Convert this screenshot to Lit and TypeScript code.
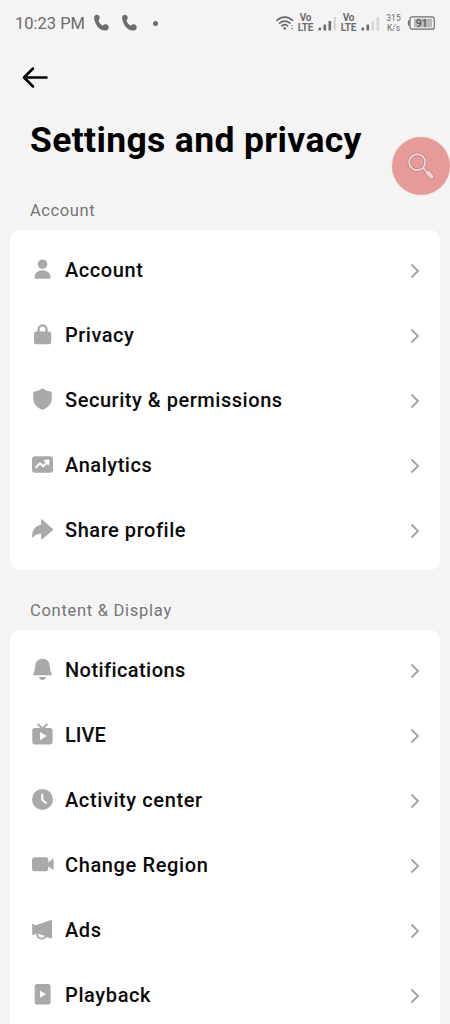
import { LitElement, html, css, svg, TemplateResult } from "lit";
import { customElement, property } from "lit/decorators.js";

type Item = { icon: string; label: string; tracking: number };

const icons: Record<string, TemplateResult> = {
  account: svg`<circle cx="12.5" cy="7.2" r="4.8"/><path d="M4.5 20.5C4.500 16.400 8 13.300 12.500 13.300s8.100 2.900 8.100 7.200q0 1.200-1.200 1.200H5.700q-1.200 0-1.200-1.200z"/>`,
  privacy: svg`<rect x="4" y="9.600" width="17.200" height="12.600" rx="2.200"/><path d="M8.600 11V7.300a3.950 3.950 0 0 1 7.900 0V11" fill="none" stroke="#a9a9a9" stroke-width="2.300"/>`,
  security: svg`<path d="M12.500 1.400q.7 0 1.300.5 3 2.100 6.500 2.500 1.500.2 1.500 1.600v5.300c0 5.400-3.300 8.800-8.300 11.200q-1 .5-2 0c-5-2.400-8.300-5.800-8.300-11.200V6q0-1.400 1.500-1.600 3.500-.4 6.500-2.500.6-.5 1.300-.5z"/>`,
  analytics: svg`<rect x="2" y="4.300" width="21" height="16.400" rx="3"/><path d="M6 15.400 10 11.200l3.200 3.200 5-5.400M14.600 8.900l4-.5-.4 4" fill="none" stroke="#fff" stroke-width="1.900" stroke-linejoin="round" stroke-linecap="round"/>`,
  share: svg`<path d="M11 3.300q0-1.700 1.400-.6l10.200 9q.9.900 0 1.800l-10.200 8.600q-1.400 1-1.400-.7v-4.600c-3.700 0-5.600 1.100-7.600 3.200q-1.700 1.300-1.400-.8C2.500 12.800 5.400 8.400 11 7.700z"/>`,
  bell: svg`<path d="M12.500 1.700c4.500 0 6.900 2.900 7.300 7.300.3 3.600.6 5.300 2 7.600q.7 1.600-.8 1.600H4q-1.500 0-.8-1.600c1.400-2.300 1.700-4 2-7.600C5.600 4.600 8 1.700 12.500 1.700zM9 19.900h7q-.6 2.900-3.500 2.900t-3.500-2.900z"/>`,
  live: svg`<path d="M7.600 2 12.500 6.700 17.400 2" fill="none" stroke="#a9a9a9" stroke-width="2"/><rect x="2.300" y="5.900" width="20.300" height="16.500" rx="2.600"/><path d="M10 10v8.200l6.800-4.100z" fill="#fff"/>`,
  clock: svg`<circle cx="12.500" cy="12.400" r="10.500"/><path d="M12.300 6.700v6.200l4.200 3.500" fill="none" stroke="#fff" stroke-width="2"/>`,
  camera: svg`<rect x="2" y="5.300" width="16.300" height="14" rx="3"/><path d="m17.600 11 4.900-3.900q1.100-.8 1.100.5v9.500q0 1.300-1.100.5l-4.900-3.900z"/>`,
  ads: svg`<path d="M2.200 7.500q0-1 .9-.6l2.600 1.300L21 3q1-.3 1 .8v16.800q0 1-1 .8L6 16.600l-2.900 1.500q-.9.400-.9-.6z"/><path d="M7.100 16c-.2 7 8.900 7 9 1.900" fill="none" stroke="#a9a9a9" stroke-width="1.800"/><path d="m8.400 16.900 6.200 1.900c-1.200 2.700-6.100 2.200-6.200-1.900z" fill="#fff"/>`,
  playback: svg`<rect x="4.700" y="2" width="15.900" height="20.500" rx="2.600"/><path d="M10 8.600v7.200l6-3.600z" fill="#fff"/>`,
};

const accountItems: Item[] = [
  { icon: "account", label: "Account", tracking: 0.57 },
  { icon: "privacy", label: "Privacy", tracking: 0.5 },
  { icon: "security", label: "Security & permissions", tracking: 0.54 },
  { icon: "analytics", label: "Analytics", tracking: 0.55 },
  { icon: "share", label: "Share profile", tracking: 0.55 },
];

const displayItems: Item[] = [
  { icon: "bell", label: "Notifications", tracking: 0.42 },
  { icon: "live", label: "LIVE", tracking: 0 },
  { icon: "clock", label: "Activity center", tracking: 0.6 },
  { icon: "camera", label: "Change Region", tracking: 0.63 },
  { icon: "ads", label: "Ads", tracking: 0.6 },
  { icon: "playback", label: "Playback", tracking: 0.62 },
];

@customElement("status-bar")
export class StatusBar extends LitElement {
  static styles = css`
    :host { display: flex; height: 46px; box-sizing: border-box; padding: 0 15px; align-items: center; justify-content: space-between; color: #6c6c6c; }
    .left { display: flex; align-items: center; }
    .time { font-size: 16.500px; width: 78px; white-space: nowrap; }
    .phone { width: 16px; height: 18px; margin-right: 12px; }
    .dot { width: 5px; height: 5px; border-radius: 50%; background: #6c6c6c; margin-left: 4px; }
    .right { display: flex; align-items: center; }
    .wifi { width: 18px; height: 16px; }
    .volte { display: flex; flex-direction: column; align-items: center; width: 17px; font: 700 10px/10px Roboto, sans-serif; letter-spacing: -0.2px; margin-left: 3px; }
    .bars { width: 19px; height: 15px; margin: 0 0 0 4px; }
    .speed { display: flex; flex-direction: column; align-items: center; width: 15px; font-size: 8.500px; line-height: 10px; margin: 0 6px 0 6px; }
    .battery { width: 28px; height: 14px; }
    .level { font: 500 10.500px Roboto, sans-serif; }
  `;

  phone() {
    return html`<svg class="phone" viewBox="0 0 16 18" fill="#6c6c6c"><path d="M1.200 4.400C.9 2 2.200.7 3.900.8 6 1 7.200 2.700 6.600 4.600c-.3 1-1 1.500-1 2.400.7 2 2.200 3.700 4 4.700 1-.8 1.800-1.500 3.200-1.400 1.700.1 2.900 1.500 2.900 3.200 0 2-1.700 3.200-3.900 3C6.200 16.200 1.900 10.300 1.200 4.400z"/></svg>`;
  }

  bars(active: number) {
    return html`<svg class="bars" viewBox="0 0 19 15" fill="#6c6c6c">
      ${[3, 6, 9.5, 13.5].map((h, i) => svg`<rect x=${0.5 + i * 5} y=${14.5 - h} width="2.600" height=${h} rx=".6" opacity=${i < active ? 1 : 0.22}/>`)}
    </svg>`;
  }

  render() {
    return html`
      <div class="left"><span class="time">10:23 PM</span>${this.phone()}${this.phone()}<span class="dot"></span></div>
      <div class="right">
        <svg class="wifi" viewBox="0 0 18 16" fill="none" stroke="#6c6c6c" stroke-width="1.700" stroke-linecap="round"><path d="M1 5.300c4.500-4.300 11-4.300 15.500 0M3.600 8.200c3-2.700 7.300-2.700 10.300 0M6 10.900c1.700-1.400 3.900-1.400 5.500 0"/><circle cx="8.700" cy="13.400" r="1.300" fill="#6c6c6c" stroke="none"/><path d="M16 10.700h.1M16 13.500h.1" stroke-width="1.300"/></svg>
        <span class="volte"><span>Vo</span><span>LTE</span></span>${this.bars(3)}
        <span class="volte"><span>Vo</span><span>LTE</span></span>${this.bars(2)}
        <span class="speed"><span>315</span><span>K/s</span></span>
        <svg class="battery" viewBox="0 0 28 14"><rect x="3" y=".8" width="24.200" height="12.400" rx="2" fill="none" stroke="#6c6c6c" stroke-width="1.200"/><path d="M2.500 4C.8 4 .8 5 .8 7s0 3 1.700 3z" fill="#6c6c6c"/><rect x="7" y="2.600" width="18" height="8.800" fill="#b9b9b9"/><text class="level" x="14.800" y="10.800" text-anchor="middle" fill="#555">91</text></svg>
      </div>`;
  }
}

@customElement("settings-group")
export class SettingsGroup extends LitElement {
  @property() heading = "";
  @property({ attribute: false }) items: Item[] = [];
  @property({ type: Number }) tracking = 0;

  static styles = css`
    :host { display: block; }
    .heading { height: 40px; line-height: 41px; padding-left: 30px; font-size: 16.500px; color: #757575; }
    .card { margin: 0 10px; padding: 7.500px 18px 7.500px 20px; background: #fff; border-radius: 10px; }
    .row { display: flex; align-items: center; height: 65px; }
    .icon { width: 25px; height: 25px; fill: #a9a9a9; flex: none; }
    .label { flex: 1; margin-left: 10px; font-size: 20px; font-weight: 500; color: #0a0a0a; white-space: nowrap; }
    .chevron { width: 14px; height: 18px; flex: none; position: relative; top: 1px; }
  `;

  render() {
    return html`
      <div class="heading"><span style="letter-spacing:${this.tracking}px">${this.heading}</span></div>
      <div class="card">
        ${this.items.map((it) => html`<div class="row">
          <svg class="icon" viewBox="0 0 25 25">${icons[it.icon]}</svg>
          <span class="label" style="letter-spacing:${it.tracking}px">${it.label}</span>
          <svg class="chevron" viewBox="0 0 14 18"><path d="M3.500 2.500 10 9l-6.500 6.500" fill="none" stroke="#a5a5a5" stroke-width="1.900"/></svg>
        </div>`)}
      </div>`;
  }
}

@customElement("app-root")
export class AppRoot extends LitElement {
  static styles = css`
    :host { display: block; position: relative; height: 1024px; overflow: hidden; background: #f4f4f4; font-family: Roboto, "Liberation Sans", sans-serif; }
    .nav { height: 62px; padding: 0 20px; display: flex; align-items: center; }
    .back { width: 30px; height: 30px; }
    .title { margin: 0; height: 81.500px; box-sizing: border-box; padding: 11px 0 0 30px; font-size: 35.500px; line-height: 42px; font-weight: 700; letter-spacing: 0.35px; color: #000; white-space: nowrap; }
    .second { margin-top: 20px; }
    .search { position: absolute; left: 391.500px; top: 136.500px; width: 58px; height: 58px; border-radius: 50%; background: #e69b98; box-shadow: 0 0 3px rgba(0, 0, 0, 0.08); }
    .lens { width: 58px; height: 58px; display: block; }
  `;

  render() {
    return html`
      <status-bar></status-bar>
      <div class="nav"><svg class="back" viewBox="0 0 30 30" fill="none" stroke="#000" stroke-width="2.500" stroke-linecap="round" stroke-linejoin="round"><path d="M13 6.500 4 15.500l9 9M4.500 15.500h22"/></svg></div>
      <h1 class="title">Settings and privacy</h1>
      <settings-group heading="Account" .tracking=${0.6} .items=${accountItems}></settings-group>
      <settings-group class="second" heading="Content &amp; Display" .tracking=${0.72} .items=${displayItems}></settings-group>
      <div class="search"><svg class="lens" viewBox="0 0 58 58" fill="none" stroke-linecap="round">
        <g stroke="#b98684"><circle cx="25.200" cy="25.200" r="8" stroke-width="3.600"/><path d="m31.200 31.200 4 4" stroke-width="3.600"/><path d="m36 36 3.500 3.500" stroke-width="6"/></g>
        <g stroke="#efd3d1"><circle cx="25.200" cy="25.200" r="8" stroke-width="1.900"/><path d="m31.200 31.200 4 4" stroke-width="1.800"/><path d="m36 36 3.500 3.500" stroke-width="4.200"/></g>
      </svg></div>`;
  }
}
